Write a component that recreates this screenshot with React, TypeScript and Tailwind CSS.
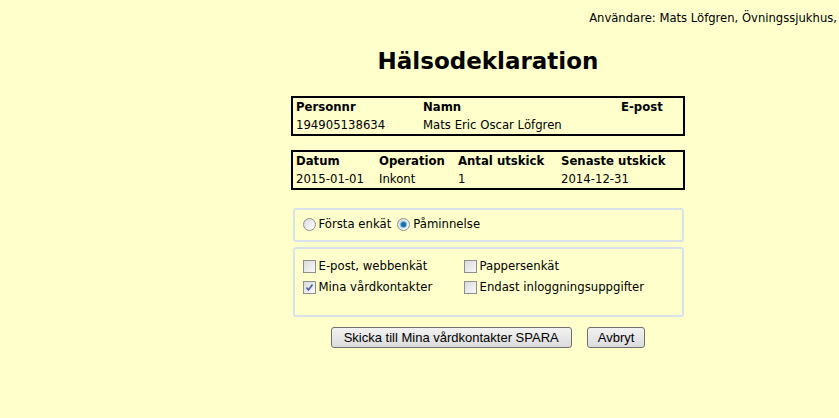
import React from "react";

const font = { fontFamily: '"DejaVu Sans", Verdana, sans-serif' };

function Radio({ checked }: { checked?: boolean }) {
  return (
    <span className="inline-flex h-[13px] w-[13px] items-center justify-center rounded-full border border-[#8f8f8f] bg-gradient-to-br from-[#dcdcdc] to-[#ffffff]">
      {checked && <span className="h-[5px] w-[5px] rounded-full bg-[#1a6fa8] shadow-[0_0_1px_1px_#6cb1e0]" />}
    </span>
  );
}

function Check({ checked }: { checked?: boolean }) {
  return (
    <span className="inline-flex h-[13px] w-[13px] items-center justify-center border border-[#8f8f8f] bg-gradient-to-br from-[#dcdcdc] to-[#f8f8f8]">
      {checked && (
        <svg width="9" height="9" viewBox="0 0 9 9">
          <path d="M1.5 4.5 L3.5 7 L7.5 1.5" fill="none" stroke="#4a5f9f" strokeWidth="1.6" />
        </svg>
      )}
    </span>
  );
}

function Option({ label, checked, radio }: { label: string; checked?: boolean; radio?: boolean }) {
  return (
    <label className="flex items-center gap-[3px]">
      {radio ? <Radio checked={checked} /> : <Check checked={checked} />}
      <span>{label}</span>
    </label>
  );
}

export default function App() {
  return (
    <div className="min-h-[418px] w-[839px] overflow-hidden bg-[#ffffcc] text-[11.7px] text-black" style={font}>
      <div className="flex h-[38px] items-center justify-end whitespace-nowrap pr-[2px] text-[11.6px]">
        Användare: Mats Löfgren, Övningssjukhus,
      </div>

      <div className="ml-[291px] flex w-[394px] flex-col items-center">
        <h1 className="mt-[8px] text-[23px] font-bold leading-[30px]">Hälsodeklaration</h1>

        <table className="mt-[20px] w-full border-2 border-black leading-[18px]">
          <tbody>
            <tr className="font-bold">
              <td className="w-[131px] pl-[3px]">Personnr</td>
              <td className="w-[198px]">Namn</td>
              <td>E-post</td>
            </tr>
            <tr>
              <td className="pl-[3px]">194905138634</td>
              <td>Mats Eric Oscar Löfgren</td>
              <td></td>
            </tr>
          </tbody>
        </table>

        <table className="mt-[14px] w-full border-2 border-black leading-[18px]">
          <tbody>
            <tr className="font-bold">
              <td className="w-[87px] pl-[3px]">Datum</td>
              <td className="w-[79px]">Operation</td>
              <td className="w-[103px]">Antal utskick</td>
              <td>Senaste utskick</td>
            </tr>
            <tr>
              <td className="pl-[3px]">2015-01-01</td>
              <td>Inkont</td>
              <td>1</td>
              <td>2014-12-31</td>
            </tr>
          </tbody>
        </table>

        <div className="mt-[18px] flex h-[34px] w-[391px] items-center gap-[6px] rounded-[3px] border-2 border-[#d8e2ea] pl-[8px]">
          <Option radio label="Första enkät" />
          <Option radio checked label="Påminnelse" />
        </div>

        <div className="mt-[5px] grid h-[70px] w-[391px] grid-cols-[161px_1fr] content-start gap-y-[3px] rounded-[3px] border-2 border-[#d8e2ea] pl-[8px] pt-[9px]">
          <Option label="E-post, webbenkät" />
          <Option label="Pappersenkät" />
          <Option checked label="Mina vårdkontakter" />
          <Option label="Endast inloggningsuppgifter" />
        </div>

        <div className="mt-[10px] flex gap-[15px] text-[13px]" style={{ fontFamily: '"Liberation Sans", Arial, sans-serif' }}>
          <button className="h-[21px] rounded-[3px] border border-[#707070] bg-gradient-to-b from-[#f2f2f2] to-[#dcdcdc] px-[12px]">
            Skicka till Mina vårdkontakter SPARA
          </button>
          <button className="h-[21px] rounded-[3px] border border-[#707070] bg-gradient-to-b from-[#f2f2f2] to-[#dcdcdc] px-[10px]">
            Avbryt
          </button>
        </div>
      </div>
    </div>
  );
}
